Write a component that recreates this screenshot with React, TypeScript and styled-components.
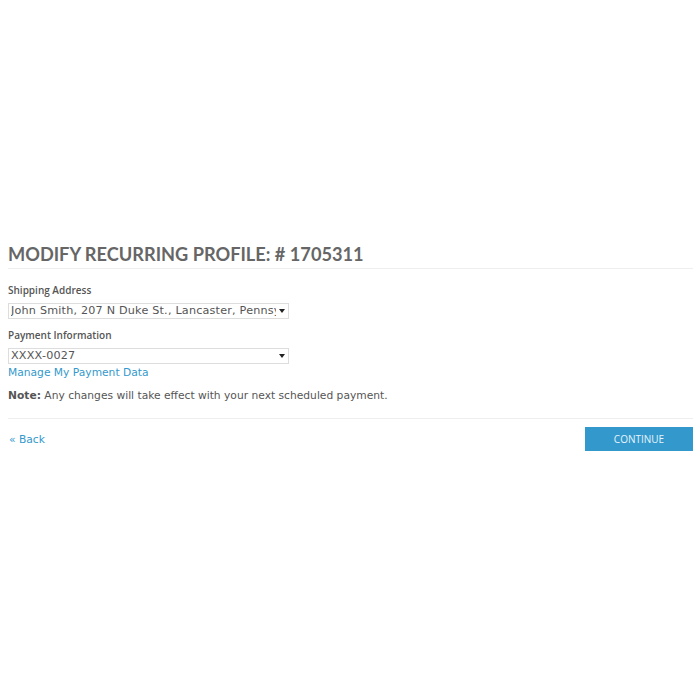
import styled, { createGlobalStyle } from 'styled-components';

const GlobalStyle = createGlobalStyle`
    html, body {
        margin: 0;
        padding: 0;
        background: #ffffff;
    }
    body {
        font-family: 'DejaVu Sans', Verdana, sans-serif;
        font-size: 10.7px;
        color: #555555;
    }
`;

const Page = styled.div`
    width: 685px;
    padding: 243px 0 0 8px;
`;

const Title = styled.h1`
    margin: 0;
    padding-bottom: 3px;
    border-bottom: 1px solid #eeeeee;
    font-family: Lato, 'Open Sans', sans-serif;
    font-size: 18.2px;
    font-weight: 700;
    color: #666666;
    line-height: 22px;
`;

const Form = styled.div`
    padding-top: 14px;
    padding-bottom: 15px;
    border-bottom: 1px solid #eeeeee;
`;

const Field = styled.div`
    margin-bottom: 9px;
`;

const Label = styled.label`
    display: block;
    margin-bottom: 6px;
    font-family: 'Open Sans', sans-serif;
    font-size: 10px;
    font-weight: 600;
    color: #555555;
    line-height: 14px;
`;

const SelectBox = styled.div`
    box-sizing: border-box;
    display: flex;
    align-items: center;
    width: 281px;
    height: 16px;
    border: 1px solid #dddddd;
    padding: 0 3px 0 2px;
`;

const SelectValue = styled.span`
    flex: 1;
    overflow: hidden;
    white-space: nowrap;
    font-size: 11.2px;
    letter-spacing: 0.2px;
    line-height: 14px;
    color: #555555;
`;

const Caret = styled.span`
    flex: none;
    margin-left: 3px;
    width: 0;
    height: 0;
    border-left: 3px solid transparent;
    border-right: 3px solid transparent;
    border-top: 4px solid #222222;
`;

const Link = styled.a`
    display: inline-block;
    color: #3399cc;
    text-decoration: none;
    font-size: 10.7px;
    line-height: 17px;
    cursor: pointer;
`;

const PaymentField = styled(Field)`
    margin-bottom: 8px;
`;

const Note = styled.p`
    margin: 0;
    font-size: 10.7px;
    color: #555555;
    line-height: 14px;
`;

const Actions = styled.div`
    display: flex;
    justify-content: space-between;
    align-items: center;
    padding-top: 8px;
`;

const BackLink = styled(Link)`
    padding-left: 1px;
`;

const ContinueButton = styled.button`
    width: 108px;
    height: 24px;
    border: none;
    background: #3399cc;
    color: #e8f4fb;
    font-family: 'Open Sans', sans-serif;
    font-size: 10px;
    text-transform: uppercase;
    cursor: pointer;
`;

const Select = ({ value }: { value: string }) => (
    <SelectBox>
        <SelectValue>{value}</SelectValue>
        <Caret />
    </SelectBox>
);

const App = () => {
    return (
        <>
            <GlobalStyle />
            <Page>
                <Title>MODIFY RECURRING PROFILE: # 1705311</Title>
                <Form>
                    <Field>
                        <Label>Shipping Address</Label>
                        <Select value="John Smith, 207 N Duke St., Lancaster, Pennsylvania 17602" />
                    </Field>
                    <PaymentField>
                        <Label>Payment Information</Label>
                        <Select value="XXXX-0027" />
                        <Link>Manage My Payment Data</Link>
                    </PaymentField>
                    <Note>
                        <b>Note:</b> Any changes will take effect with your next scheduled payment.
                    </Note>
                </Form>
                <Actions>
                    <BackLink>« Back</BackLink>
                    <ContinueButton>Continue</ContinueButton>
                </Actions>
            </Page>
        </>
    );
};

export default App;
